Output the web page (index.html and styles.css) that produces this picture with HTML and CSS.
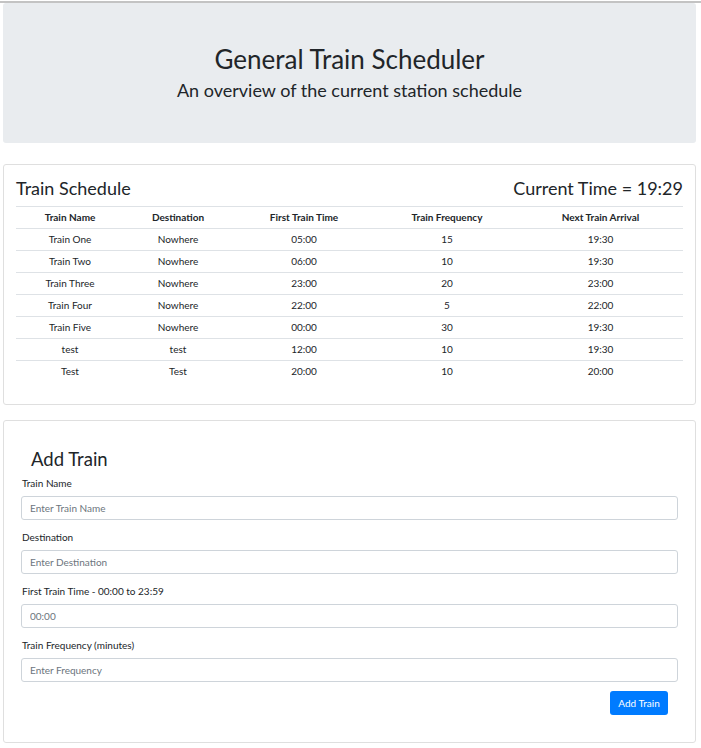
FILE: index.html
```html
<!DOCTYPE html>
<html lang="en">
<head>
<meta charset="utf-8">
<title>General Train Scheduler</title>
<link rel="stylesheet" href="styles.css">
</head>
<body>
<div class="topline"></div>
<div class="page">
  <header class="jumbotron">
    <h1 class="title">General Train Scheduler</h1>
    <p class="subtitle">An overview of the current station schedule</p>
  </header>

  <section class="card schedule">
    <div class="schedule-head">
      <h3 class="card-title">Train Schedule</h3>
      <h3 class="card-title">Current Time = 19:29</h3>
    </div>
    <table class="table">
      <colgroup>
        <col class="c1"><col class="c2"><col class="c3"><col class="c4"><col class="c5">
      </colgroup>
      <thead>
        <tr><th>Train Name</th><th>Destination</th><th>First Train Time</th><th>Train Frequency</th><th>Next Train Arrival</th></tr>
      </thead>
      <tbody>
        <tr><td>Train One</td><td>Nowhere</td><td>05:00</td><td>15</td><td>19:30</td></tr>
        <tr><td>Train Two</td><td>Nowhere</td><td>06:00</td><td>10</td><td>19:30</td></tr>
        <tr><td>Train Three</td><td>Nowhere</td><td>23:00</td><td>20</td><td>23:00</td></tr>
        <tr><td>Train Four</td><td>Nowhere</td><td>22:00</td><td>5</td><td>22:00</td></tr>
        <tr><td>Train Five</td><td>Nowhere</td><td>00:00</td><td>30</td><td>19:30</td></tr>
        <tr><td>test</td><td>test</td><td>12:00</td><td>10</td><td>19:30</td></tr>
        <tr><td>Test</td><td>Test</td><td>20:00</td><td>10</td><td>20:00</td></tr>
      </tbody>
    </table>
  </section>

  <section class="card add">
    <h2 class="add-title">Add Train</h2>
    <form class="form">
      <div class="group">
        <label class="label" for="name">Train Name</label>
        <input class="input" id="name" type="text" placeholder="Enter Train Name">
      </div>
      <div class="group">
        <label class="label" for="dest">Destination</label>
        <input class="input" id="dest" type="text" placeholder="Enter Destination">
      </div>
      <div class="group">
        <label class="label" for="first">First Train Time - 00:00 to 23:59</label>
        <input class="input" id="first" type="text" placeholder="00:00">
      </div>
      <div class="group last">
        <label class="label" for="freq">Train Frequency (minutes)</label>
        <input class="input" id="freq" type="text" placeholder="Enter Frequency">
      </div>
      <div class="actions">
        <button class="btn" type="button">Add Train</button>
      </div>
    </form>
  </section>
</div>
</body>
</html>
```

FILE: styles.css
```css
* { box-sizing: border-box; }

html, body {
  margin: 0;
  padding: 0;
  background: #ffffff;
}

body {
  font-family: Lato, "Noto Sans", "Liberation Sans", sans-serif;
  color: #212529;
  padding-top: 1px;
}

.topline {
  height: 2px;
  background: #c3c3c3;
}

.page {
  width: 693px;
  margin-left: 3px;
}

.jumbotron {
  background: #e9ecef;
  border-radius: 3px;
  height: 140px;
  padding-top: 41px;
  text-align: center;
}

.title {
  margin: 0;
  font-size: 26px;
  font-weight: 400;
  line-height: 30px;
}

.subtitle {
  margin: 5px 0 0;
  font-size: 18px;
  line-height: 22px;
}

.card {
  border: 1px solid #dfdfdf;
  border-radius: 3px;
  background: #fff;
}

.schedule {
  margin-top: 21px;
  padding: 11px 12px 21px;
}

.schedule-head {
  display: flex;
  justify-content: space-between;
  align-items: center;
  margin-bottom: 6px;
}

.card-title {
  margin: 0;
  font-size: 18px;
  font-weight: 400;
  line-height: 24px;
}

.table {
  width: 100%;
  border-collapse: collapse;
  table-layout: fixed;
  font-size: 10px;
}

.c1 { width: 108px; }
.c2 { width: 108px; }
.c3 { width: 144px; }
.c4 { width: 142px; }
.c5 { width: 165px; }

.table th,
.table td {
  border-top: 1px solid #dee2e6;
  height: 22px;
  padding: 0;
  text-align: center;
  vertical-align: middle;
  line-height: 15px;
}

.table th {
  font-weight: 700;
}

.add {
  margin-top: 15px;
  padding: 26px 17px 27px 17px;
}

.add-title {
  margin: 0 0 5px 10px;
  font-size: 18.5px;
  font-weight: 400;
  line-height: 24px;
}

.group {
  margin-bottom: 10px;
}

.group.last {
  margin-bottom: 9px;
}

.label {
  display: block;
  font-size: 10px;
  line-height: 15px;
  margin: 0 0 5px 1px;
}

.input {
  display: block;
  width: 100%;
  height: 24px;
  border: 1px solid #ced4da;
  border-radius: 3px;
  padding: 0 8px;
  font-family: inherit;
  font-size: 10px;
  color: #495057;
  background: #fff;
}

.input::placeholder {
  color: #6c757d;
  opacity: 1;
}

.actions {
  display: flex;
  justify-content: flex-end;
  padding-right: 10px;
}

.btn {
  width: 58px;
  height: 24px;
  border: 0;
  border-radius: 3px;
  background: #007bff;
  color: #fff;
  font-family: inherit;
  font-size: 10px;
  padding: 0;
}
```
